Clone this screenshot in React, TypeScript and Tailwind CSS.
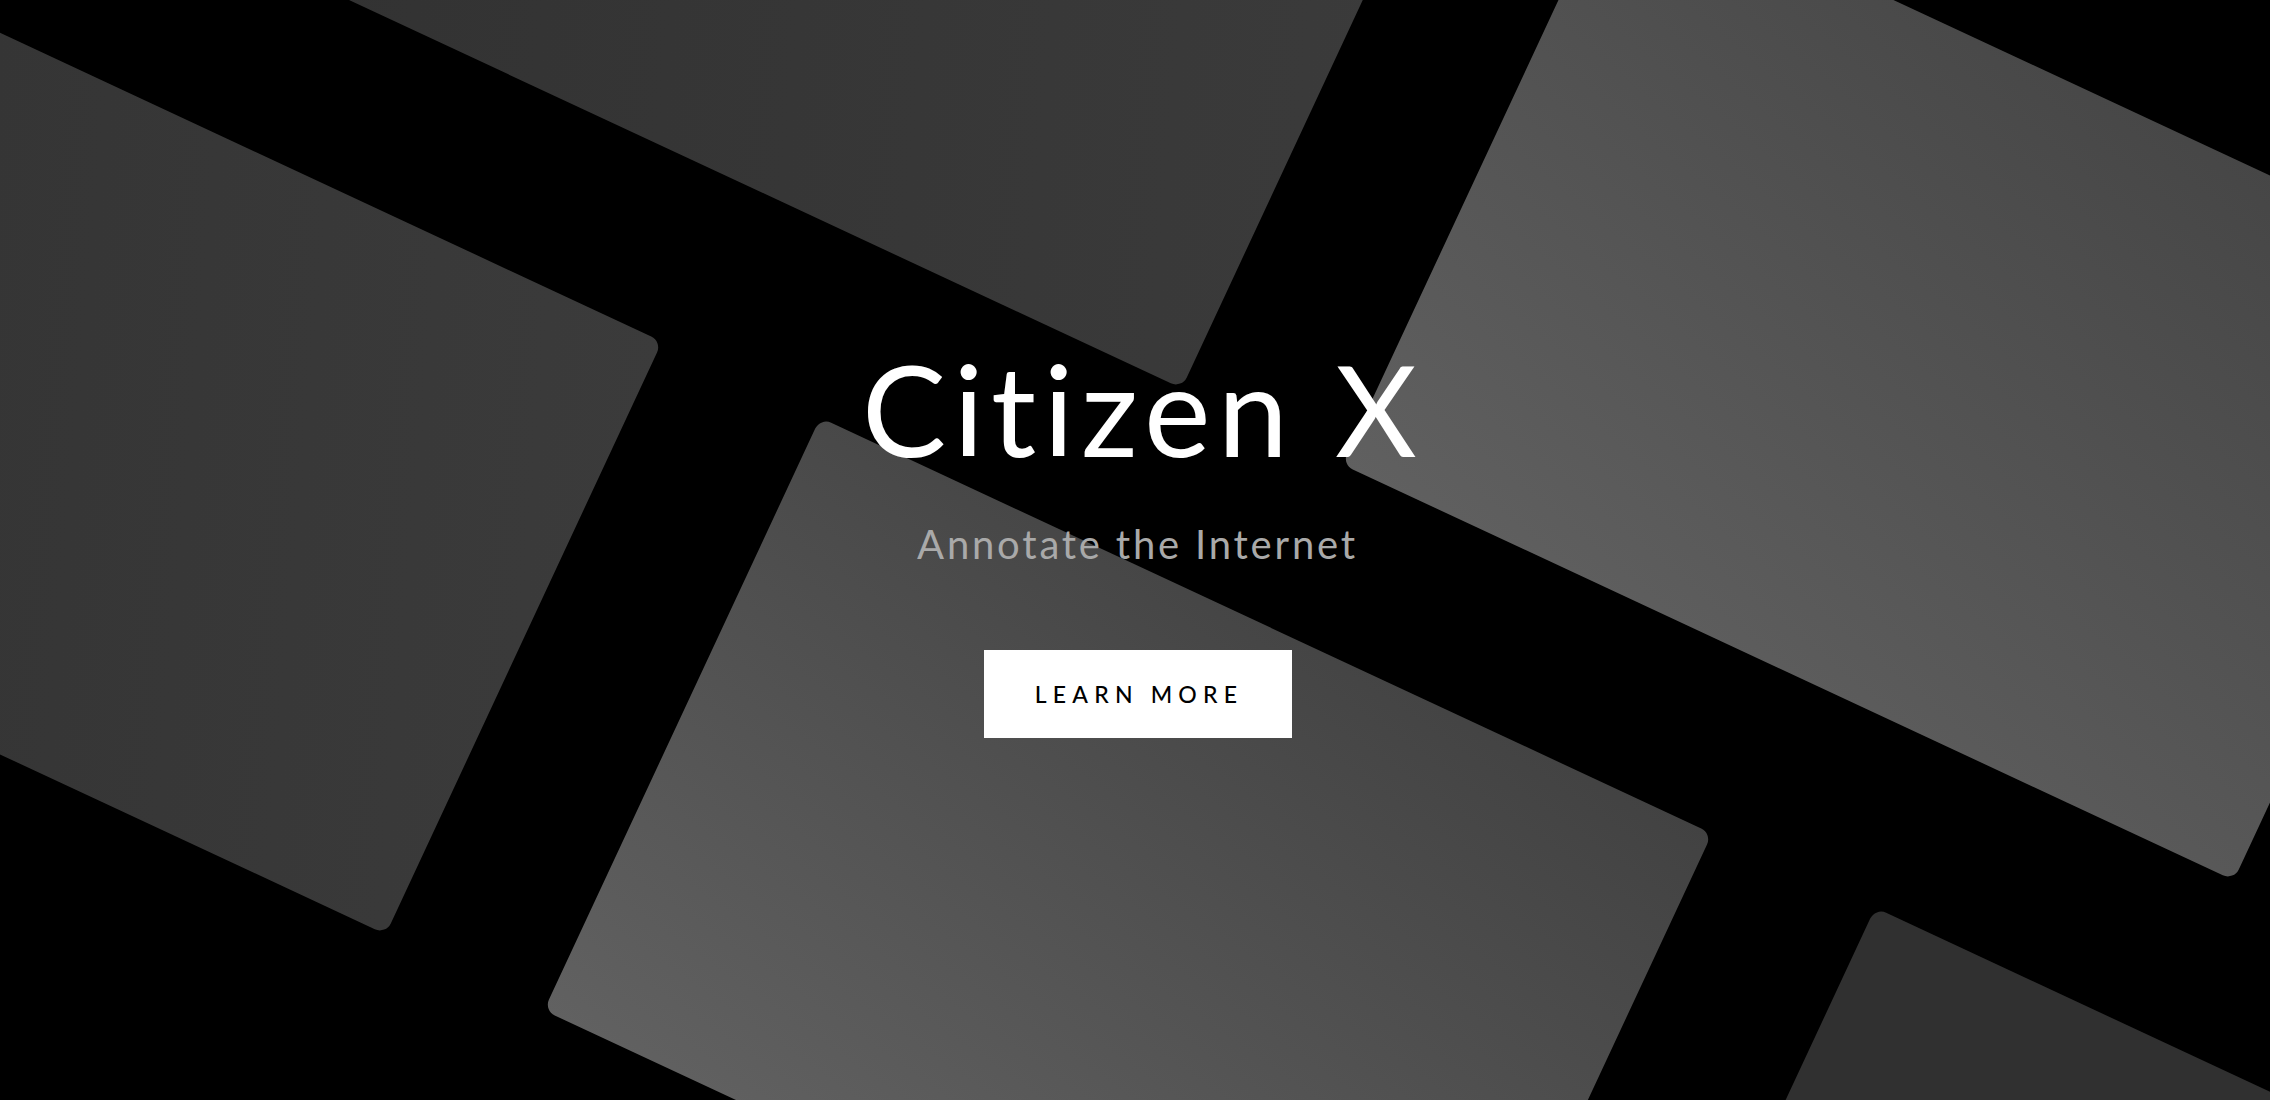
import React from "react";

const tile = "absolute w-[984px] h-[654px] rounded-[12px] rotate-[25deg]";

export default function App() {
  return (
    <div className="relative w-full h-[1100px] overflow-hidden bg-black" style={{ fontFamily: "Lato, 'Liberation Sans', sans-serif" }}>
      {/* background tiles */}
      <div className={`${tile} left-[-414px] top-[103px] bg-[linear-gradient(70deg,#313131_0%,#3b3b3b_100%)]`} />
      <div className={`${tile} left-[382px] top-[-443px] bg-[linear-gradient(70deg,#323232_0%,#3b3b3b_100%)]`} />
      <div className={`${tile} left-[1434px] top-[49px] bg-[linear-gradient(15deg,#606060_0%,#444444_100%)]`} />
      <div className={`${tile} left-[636px] top-[595px] bg-[linear-gradient(10deg,#616161_0%,#424242_100%)]`} />
      <div className={`${tile} left-[1691px] top-[1085px] bg-[#303030]`} />

      {/* hero content */}
      <div className="relative z-10 flex flex-col items-center pt-[346px]">
        <h1 className="text-[126px] leading-[126px] font-normal text-white tracking-[7.3px] pl-[16px]">Citizen X</h1>
        <p className="mt-[52px] text-[40px] leading-[40px] font-normal text-[#a9a9a9] tracking-[2.8px] pl-[5px]">Annotate the Internet</p>
        <button className="mt-[86px] ml-[6px] w-[308px] h-[88px] bg-white flex items-center justify-center text-[23px] leading-none font-medium text-black tracking-[6.2px] pl-[2px]">
          LEARN MORE
        </button>
      </div>
    </div>
  );
}
